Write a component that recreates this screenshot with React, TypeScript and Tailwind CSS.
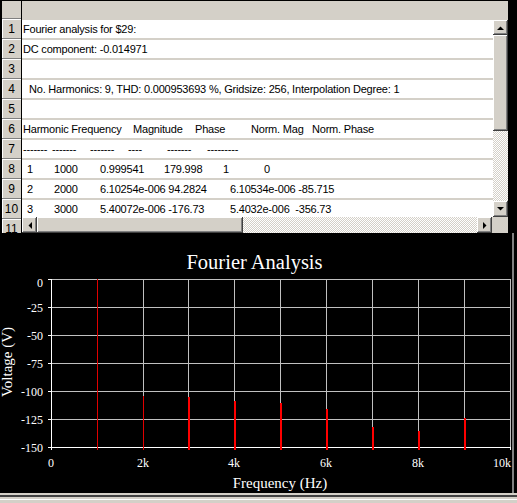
const raised =
  "bg-[#d4d0c8] shadow-[inset_-1px_-1px_0_#404040,inset_1px_1px_0_#ffffff,inset_-2px_-2px_0_#808080]";
const dither =
  "bg-[repeating-conic-gradient(#d4d0c8_0_25%,#ffffff_0_50%)] bg-[length:2px_2px]";

function Arrow({ dir }: { dir: "up" | "down" | "left" | "right" }) {
  const pts = {
    up: "0,4 7,4 3.5,0.5",
    down: "0,0 7,0 3.5,3.5",
    left: "4,0 4,7 0.5,3.5",
    right: "0,0 0,7 3.5,3.5",
  }[dir];
  const vertical = dir === "up" || dir === "down";
  return (
    <svg width={vertical ? 7 : 4} height={vertical ? 4 : 7} className="block">
      <polygon points={pts} fill="#000" />
    </svg>
  );
}

function Row({ children }: { children?: React.ReactNode }) {
  return (
    <div className="border-t-2 border-[#d4d0c8] h-[20px] shrink-0">
      <div className="h-[18px] bg-white flex items-center whitespace-pre leading-[18px]">{children}</div>
    </div>
  );
}

function Label({ n }: { n: number }) {
  return (
    <div className="h-[20px] shrink-0 border-t border-[#808080] bg-[#d4d0c8] shadow-[inset_1px_1px_0_#ffffff] flex items-center justify-center text-[12px] leading-none">
      {n}
    </div>
  );
}

function Sheet() {
  return (
    <div className="flex h-[232px] ml-[2px] mt-[1px] w-[506px]">
      <div className="w-[20px] border-r border-black flex flex-col overflow-hidden">
        <div className="h-[17px] shrink-0 bg-[#d4d0c8]" />
        {Array.from({ length: 11 }, (_, i) => (
          <Label key={i} n={i + 1} />
        ))}
      </div>

      <div className="flex-1 flex flex-col">
        <div className="h-[17px] shrink-0 bg-[#d4d0c8]" />
        <div className="flex h-[199px]">
          <div className="flex-1 flex flex-col overflow-hidden text-[11px] tracking-[-0.2px] text-black">
            <Row>
              <span className="pl-[1px]">Fourier analysis for $29:</span>
            </Row>
            <Row>
              <span className="pl-[1px]">DC component: -0.014971</span>
            </Row>
            <Row />
            <Row>
              <span className="pl-[7px]">No. Harmonics: 9, THD: 0.000953693 %, Gridsize: 256, Interpolation Degree: 1</span>
            </Row>
            <Row />
            <Row>
              <span className="w-[111px] pl-[1px] shrink-0">Harmonic Frequency</span>
              <span className="w-[62px] shrink-0">Magnitude</span>
              <span className="w-[56px] shrink-0">Phase</span>
              <span className="w-[61px] shrink-0">Norm. Mag</span>
              <span>Norm. Phase</span>
            </Row>
            <Row>
              <span className="w-[30px] pl-[1px] shrink-0">-------</span>
              <span className="w-[38px] shrink-0">-------</span>
              <span className="w-[38px] shrink-0">-------</span>
              <span className="w-[39px] shrink-0">----</span>
              <span className="w-[40px] shrink-0">-------</span>
              <span>---------</span>
            </Row>
            <Row>
              <span className="w-[32px] pl-[5px] shrink-0">1</span>
              <span className="w-[46px] shrink-0">1000</span>
              <span className="w-[64px] shrink-0">0.999541</span>
              <span className="w-[59px] shrink-0">179.998</span>
              <span className="w-[41px] shrink-0">1</span>
              <span>0</span>
            </Row>
            <Row>
              <span className="w-[32px] pl-[5px] shrink-0">2</span>
              <span className="w-[46px] shrink-0">2000</span>
              <span className="w-[130px] shrink-0">6.10254e-006 94.2824</span>
              <span>6.10534e-006 -85.715</span>
            </Row>
            <Row>
              <span className="w-[32px] pl-[5px] shrink-0">3</span>
              <span className="w-[46px] shrink-0">3000</span>
              <span className="w-[130px] shrink-0">5.40072e-006 -176.73</span>
              <span>5.4032e-006  -356.73</span>
            </Row>
          </div>

          <div className="w-[15px] flex flex-col bg-[#d4d0c8] pt-[2px]">
            <div className={`h-[15px] shrink-0 flex items-center justify-center ${raised}`}>
              <Arrow dir="up" />
            </div>
            <div className={`h-[96px] shrink-0 ${raised}`} />
            <div className={`flex-1 ${dither}`} />
            <div className={`h-[16px] shrink-0 flex items-center justify-center ${raised}`}>
              <Arrow dir="down" />
            </div>
          </div>
        </div>

        <div className="flex h-[16px]">
          <div className={`w-[15px] shrink-0 flex items-center justify-center ${raised}`}>
            <Arrow dir="left" />
          </div>
          <div className={`w-[206px] shrink-0 ${raised}`} />
          <div className={`flex-1 ${dither}`} />
          <div className={`w-[15px] shrink-0 flex items-center justify-center ${raised}`}>
            <Arrow dir="right" />
          </div>
          <div className="w-[16px] shrink-0 bg-[#d4d0c8]" />
        </div>
      </div>
    </div>
  );
}

const gridX = [97, 143, 188, 234, 280, 326, 372, 418, 464, 510];
const gridY = [279, 307, 335, 363, 391, 419];
const yLabels = [
  { y: 287, t: "0" },
  { y: 312, t: "-25" },
  { y: 340, t: "-50" },
  { y: 368, t: "-75" },
  { y: 396, t: "-100" },
  { y: 424, t: "-125" },
  { y: 452, t: "-150" },
];
const xLabels = [
  { x: 51, t: "0", a: "middle" },
  { x: 143, t: "2k", a: "middle" },
  { x: 234, t: "4k", a: "middle" },
  { x: 326, t: "6k", a: "middle" },
  { x: 418, t: "8k", a: "middle" },
  { x: 511, t: "10k", a: "end" },
];
const bars = [
  { x: 97, top: 279, w: 1 },
  { x: 143, top: 396, w: 1 },
  { x: 188, top: 397, w: 2 },
  { x: 234, top: 401, w: 2 },
  { x: 280, top: 403, w: 2 },
  { x: 326, top: 409, w: 2 },
  { x: 372, top: 427, w: 2 },
  { x: 418, top: 431, w: 2 },
  { x: 464, top: 418, w: 2 },
];

function Chart() {
  return (
    <svg width={512} height={260} viewBox="0 233 512 260" className="block" shapeRendering="crispEdges">
      <text
        x={254.5}
        y={269}
        fill="#fff"
        fontSize={20.5}
        textAnchor="middle"
        fontFamily="'Liberation Serif', serif"
        shapeRendering="auto"
      >
        Fourier Analysis
      </text>

      {gridX.map((x) => (
        <rect key={x} x={x} y={279} width={1} height={171} fill="#c0c0c0" />
      ))}
      {gridY.map((y) => (
        <rect key={y} x={48} y={y} width={463} height={1} fill="#c0c0c0" />
      ))}
      {gridY.map((y) => (
        <rect key={"t" + y} x={48} y={y} width={3} height={1} fill="#fff" />
      ))}
      <rect x={51} y={279} width={1} height={171} fill="#fff" />
      <rect x={48} y={447} width={463} height={1} fill="#fff" />
      {gridX.map((x) => (
        <rect key={"b" + x} x={x} y={448} width={1} height={2} fill="#fff" />
      ))}

      {bars.map((b) => (
        <rect key={b.x} x={b.x} y={b.top} width={b.w} height={450 - b.top} fill={b.w === 1 ? "#e00000" : "#ff0000"} />
      ))}

      <g fill="#fff" fontSize={12} fontFamily="'Liberation Serif', serif" shapeRendering="auto">
        {yLabels.map((l) => (
          <text key={l.t} x={43} y={l.y} textAnchor="end">
            {l.t}
          </text>
        ))}
        {xLabels.map((l) => (
          <text key={l.t} x={l.x} y={467} textAnchor={l.a as "middle" | "end"}>
            {l.t}
          </text>
        ))}
      </g>

      <g fill="#fff" fontSize={15} fontFamily="'Liberation Serif', serif" shapeRendering="auto">
        <text x={280} y={488} textAnchor="middle">
          Frequency (Hz)
        </text>
        <text transform="translate(12 362) rotate(-90)" textAnchor="middle">
          Voltage (V)
        </text>
      </g>
    </svg>
  );
}

export default function App() {
  return (
    <div className="w-[517px] h-[503px] bg-black overflow-hidden flex flex-col font-['Liberation_Sans',Arial,sans-serif]">
      <Sheet />
      <div className="flex h-[260px] shrink-0">
        <Chart />
        <div className="w-[2px] bg-[#808080]" />
      </div>
      <div className="flex-1 flex flex-col">
        <div className="h-[2px] bg-[#d4d0c8]" />
        <div className="h-[2px] bg-[#404040]" />
        <div className="h-[2px] bg-[#d4d0c8]" />
        <div className="h-[1px] bg-white" />
        <div className="flex-1 bg-[#d4d0c8]" />
      </div>
    </div>
  );
}
